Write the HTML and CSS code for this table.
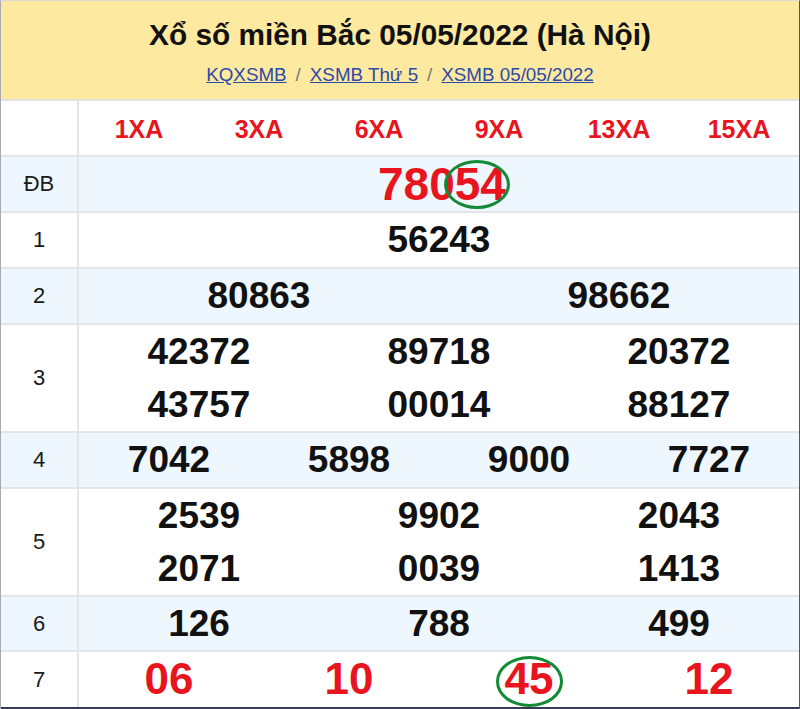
FILE: index.html
```html
<!DOCTYPE html>
<html lang="vi">
<head>
<meta charset="utf-8">
<title>XSMB 05/05/2022</title>
<link rel="stylesheet" href="styles.css">
</head>
<body>
<div class="page">
  <header class="head">
    <h1 class="title">Xổ số miền Bắc 05/05/2022 (Hà Nội)</h1>
    <nav class="crumbs">
      <a href="#">KQXSMB</a><span class="sep">/</span><a href="#">XSMB Thứ 5</a><span class="sep">/</span><a href="#">XSMB 05/05/2022</a>
    </nav>
  </header>
  <div class="table">
    <div class="row">
      <div class="label"></div>
      <div class="cells c6 codes">
        <span>1XA</span><span>3XA</span><span>6XA</span><span>9XA</span><span>13XA</span><span>15XA</span>
      </div>
    </div>
    <div class="row alt">
      <div class="label">ĐB</div>
      <div class="cells c1 special"><span>780<span class="ring">54</span></span></div>
    </div>
    <div class="row">
      <div class="label">1</div>
      <div class="cells c1"><span>56243</span></div>
    </div>
    <div class="row alt">
      <div class="label">2</div>
      <div class="cells c2"><span>80863</span><span>98662</span></div>
    </div>
    <div class="row">
      <div class="label">3</div>
      <div class="cells c3"><span>42372</span><span>89718</span><span>20372</span><span>43757</span><span>00014</span><span>88127</span></div>
    </div>
    <div class="row alt">
      <div class="label">4</div>
      <div class="cells c4"><span>7042</span><span>5898</span><span>9000</span><span>7727</span></div>
    </div>
    <div class="row">
      <div class="label">5</div>
      <div class="cells c3"><span>2539</span><span>9902</span><span>2043</span><span>2071</span><span>0039</span><span>1413</span></div>
    </div>
    <div class="row alt">
      <div class="label">6</div>
      <div class="cells c3"><span>126</span><span>788</span><span>499</span></div>
    </div>
    <div class="row last">
      <div class="label">7</div>
      <div class="cells c4 red7"><span>06</span><span>10</span><span><span class="ring r7">45</span></span><span>12</span></div>
    </div>
  </div>
</div>
</body>
</html>
```

FILE: styles.css
```css
* { box-sizing: border-box; }
html, body { margin: 0; padding: 0; background: #fff; }
body { font-family: "Liberation Sans", Arial, sans-serif; color: #000; }

.page {
  width: 800px;
  height: 709px;
  overflow: hidden;
  border-left: 1px solid #a9a9b0;
  border-right: 1px solid #55556a;
  border-top: 1px solid #dcdcdc;
}

.head {
  background: #fde99f;
  height: 100px;
  border-bottom: 2px solid #e2e2e2;
  display: flex;
  flex-direction: column;
  align-items: center;
  padding-top: 17px;
}
.title {
  margin: 0;
  font-size: 29.8px;
  font-weight: bold;
  line-height: 34px;
  color: #111;
}
.crumbs {
  margin-top: 12px;
  font-size: 18.8px;
  line-height: 22px;
  color: #777;
}
.crumbs a { color: #2c4aa8; text-decoration: underline; }
.crumbs .sep { margin: 0 9px; color: #777; }

.table { border-bottom: 2px solid #3a3a55; }
.row {
  display: grid;
  grid-template-columns: 78px 1fr;
  border-bottom: 2px solid #e3e5e8;
  background: #fff;
}
.row.alt { background: #eef6fe; }
.row.last { border-bottom: none; height: 55px; }
.label {
  border-right: 2px solid #e3e5e8;
  display: flex;
  align-items: center;
  justify-content: center;
  font-size: 22px;
  color: #1a1a1a;
}
.cells {
  display: grid;
  font-weight: bold;
  font-size: 37px;
  line-height: 54px;
  text-align: center;
  color: #111;
}
.cells > span { display: block; }
.c1 { grid-template-columns: 1fr; }
.c2 { grid-template-columns: repeat(2, 1fr); }
.c3 { grid-template-columns: repeat(3, 1fr); line-height: 53px; }
.c4 { grid-template-columns: repeat(4, 1fr); }
.c6 { grid-template-columns: repeat(6, 1fr); }

.codes { font-size: 25px; color: #e8141e; line-height: 52px; padding-top: 2px; }
.special { font-size: 46px; color: #e8141e; line-height: 54px; padding-left: 6px; }
.red7 { font-size: 44px; color: #e8141e; }

.ring { position: relative; display: inline-block; }
.ring::after {
  content: "";
  position: absolute;
  left: -11px;
  right: -4px;
  top: 3px;
  bottom: 2px;
  border: 3px solid #138a36;
  border-radius: 50%;
}
.ring.r7::after { left: -9px; right: -10px; top: 4px; bottom: -1px; }
```
